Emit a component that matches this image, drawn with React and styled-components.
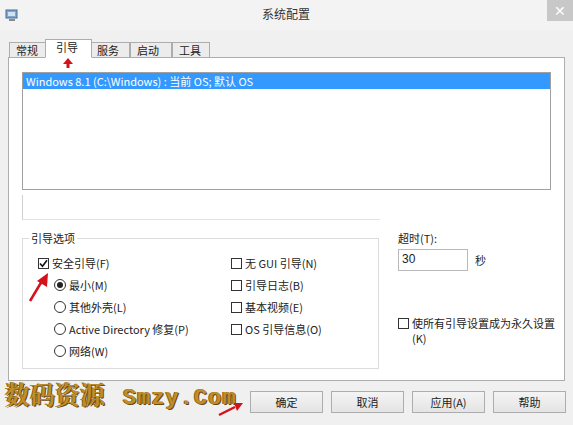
import React from 'react';
import styled, { createGlobalStyle } from 'styled-components';

const GlobalStyle = createGlobalStyle`
  html, body {
    margin: 0;
    padding: 0;
    background: #f0f0f0;
  }
  body {
    font-family: "Noto Sans CJK SC", "Noto Sans", "Liberation Sans", sans-serif;
    font-size: 11px;
    color: #1e1e1e;
  }
`;

const Window = styled.div`
  position: relative;
  width: 573px;
  height: 425px;
  background: #f0f0f0;
  box-sizing: border-box;
  overflow: hidden;
  display: flex;
  flex-direction: column;
`;

const TitleBar = styled.header`
  height: 30px;
  display: flex;
  align-items: center;
  position: relative;
  padding-left: 5px;
  background: #f3f3f3;
`;

const Title = styled.div`
  flex: 1;
  text-align: center;
  font-size: 12px;
  color: #333;
  margin-left: 6px;
  padding-bottom: 4px;
`;

const CloseButton = styled.div`
  align-self: flex-start;
  width: 26px;
  height: 21px;
  background: #c8c8c8;
  color: #fff;
  display: flex;
  align-items: center;
  justify-content: center;
  font-size: 14px;
  font-family: "Liberation Sans", sans-serif;
`;

const TabRow = styled.div`
  display: flex;
  align-items: flex-end;
  padding-left: 9px;
  height: 28px;
  margin-bottom: -1px;
  position: relative;
  z-index: 1;
`;

const Tab = styled.div`
  width: ${(p) => p.$w}px;
  height: ${(p) => (p.$active ? 19 : 16)}px;
  box-sizing: border-box;
  border: 1px solid #adadad;
  border-bottom: ${(p) => (p.$active ? '1px solid #fff' : '1px solid #adadad')};
  background: ${(p) => (p.$active ? '#fff' : '#ececec')};
  margin-left: ${(p) => (p.$active ? -2 : 0)}px;
  margin-right: ${(p) => (p.$active ? -2 : 0)}px;
  z-index: ${(p) => (p.$active ? 2 : 1)};
  padding-left: ${(p) => (p.$active ? 10 : 6)}px;
  line-height: ${(p) => (p.$active ? 14 : 15)}px;
  font-size: 11px;
  color: #222;
`;

const Panel = styled.section`
  margin: 0 8px;
  height: 324px;
  box-sizing: border-box;
  background: #fff;
  border: 1px solid #adadad;
  padding: 14px 13px 0 13px;
  display: flex;
  flex-direction: column;
`;

const BootList = styled.div`
  height: 118px;
  box-sizing: border-box;
  border: 1px solid #a0a0a0;
`;

const BootItem = styled.div`
  height: 16px;
  line-height: 16px;
  background: #3399ff;
  color: #fff;
  padding-left: 3px;
  font-size: 11px;
`;

const ActionBox = styled.div`
  margin-top: 5px;
  width: 358px;
  height: 25px;
  box-sizing: border-box;
  border-left: 1px solid #d0d0d0;
  border-bottom: 1px solid #e2e2e2;
`;

const OptionsRow = styled.div`
  display: flex;
  margin-top: 10px;
`;

const GroupBox = styled.fieldset`
  flex: 0 0 357px;
  width: 357px;
  height: 139px;
  box-sizing: border-box;
  margin: 0;
  border: 1px solid #dcdcdc;
  padding: 9px 0 0 6px;
`;

const Legend = styled.legend`
  padding: 0 2px;
  margin-left: 0;
  font-size: 11px;
  color: #222;
`;

const Columns = styled.div`
  display: grid;
  grid-template-columns: 193px 1fr;
  padding-left: 9px;
`;

const Column = styled.div`
  display: flex;
  flex-direction: column;
  gap: 6px;
`;

const OptionLine = styled.label`
  display: flex;
  align-items: center;
  height: 16px;
  gap: 3px;
  padding-left: ${(p) => p.$indent || 0}px;
  font-size: 11px;
  color: #222;
  white-space: nowrap;
`;

const Box = styled.span`
  width: 11px;
  height: 11px;
  box-sizing: border-box;
  border: 1px solid #333;
  background: #fff;
  flex-shrink: 0;
  display: flex;
  align-items: center;
  justify-content: center;
`;

const Radio = styled.span`
  width: 12px;
  height: 12px;
  box-sizing: border-box;
  border: 1px solid #333;
  border-radius: 50%;
  background: #fff;
  flex-shrink: 0;
  display: flex;
  align-items: center;
  justify-content: center;
  &::after {
    content: '';
    display: ${(p) => (p.$on ? 'block' : 'none')};
    width: 6px;
    height: 6px;
    border-radius: 50%;
    background: #222;
  }
`;

const RightSide = styled.div`
  flex: 1;
  min-width: 0;
  padding-left: 19px;
  display: flex;
  flex-direction: column;
`;

const FieldLabel = styled.div`
  font-size: 11px;
  color: #222;
  margin-top: 0;
  height: 16px;
`;

const TimeoutRow = styled.div`
  display: flex;
  align-items: center;
  gap: 7px;
  margin-top: 3px;
`;

const NumberInput = styled.div`
  width: 70px;
  height: 22px;
  box-sizing: border-box;
  border: 1px solid #b9b9b9;
  padding: 2px 0 0 3px;
  font-size: 12px;
  font-family: "Liberation Sans", sans-serif;
  color: #222;
`;

const PermanentOption = styled.label`
  display: flex;
  align-items: flex-start;
  gap: 3px;
  margin-top: 45px;
  font-size: 11px;
  line-height: 15px;
  color: #222;
  width: 160px;
  span:first-child {
    margin-top: 2px;
  }
`;

const ButtonBar = styled.footer`
  display: flex;
  justify-content: flex-end;
  gap: 8px;
  padding: 10px 7px 0 0;
`;

const Button = styled.div`
  width: 73px;
  height: 22px;
  box-sizing: border-box;
  border: 1px solid #adadad;
  background: linear-gradient(#f4f4f4, #e4e4e4);
  display: flex;
  align-items: center;
  justify-content: center;
  font-size: 11px;
  color: #222;
`;

const Watermark = styled.div`
  position: absolute;
  left: 5px;
  top: 375px;
  font-family: "Noto Serif CJK SC", "Noto Sans CJK SC", serif;
  font-weight: bold;
  font-size: 25px;
  color: #c08d28;
  text-shadow: 1px 1px 0 #6b4a10, -1px 0 0 #8a6418;
  white-space: nowrap;
  span {
    font-family: "Liberation Mono", monospace;
    font-size: 22px;
    margin-left: 18px;
    letter-spacing: 1px;
  }
`;

const Arrow = styled.svg`
  position: absolute;
  left: ${(p) => p.$x}px;
  top: ${(p) => p.$y}px;
  overflow: visible;
`;

const Check = () => (
  <svg width="9" height="9" viewBox="0 0 9 9">
    <path d="M1 4.5 L3.5 7.2 L8 1.2" fill="none" stroke="#111" strokeWidth="1.6" />
  </svg>
);

const tabs = [
  { label: '常规', w: 38 },
  { label: '引导', w: 47, active: true },
  { label: '服务', w: 40 },
  { label: '启动', w: 42 },
  { label: '工具', w: 38 },
];

export default function App() {
  return (
    <>
      <GlobalStyle />
      <Window>
        <TitleBar>
          <svg width="14" height="13" viewBox="0 0 14 13">
            <rect x="1" y="1" width="11" height="8" fill="#7fa7d0" stroke="#4a6d94" />
            <rect x="3" y="3" width="7" height="4" fill="#cfe3f5" />
            <rect x="4" y="10" width="6" height="2" fill="#8a8a8a" />
          </svg>
          <Title>系统配置</Title>
          <CloseButton>✕</CloseButton>
        </TitleBar>

        <TabRow>
          {tabs.map((t) => (
            <Tab key={t.label} $w={t.w} $active={t.active}>
              {t.label}
            </Tab>
          ))}
        </TabRow>

        <Panel>
          <BootList>
            <BootItem>Windows 8.1 (C:\Windows) : 当前 OS; 默认 OS</BootItem>
          </BootList>
          <ActionBox />

          <OptionsRow>
            <GroupBox>
              <Legend>引导选项</Legend>
              <Columns>
                <Column>
                  <OptionLine>
                    <Box>
                      <Check />
                    </Box>
                    安全引导(F)
                  </OptionLine>
                  <OptionLine $indent={16}>
                    <Radio $on />
                    最小(M)
                  </OptionLine>
                  <OptionLine $indent={16}>
                    <Radio />
                    其他外壳(L)
                  </OptionLine>
                  <OptionLine $indent={16}>
                    <Radio />
                    Active Directory 修复(P)
                  </OptionLine>
                  <OptionLine $indent={16}>
                    <Radio />
                    网络(W)
                  </OptionLine>
                </Column>
                <Column>
                  <OptionLine>
                    <Box />
                    无 GUI 引导(N)
                  </OptionLine>
                  <OptionLine>
                    <Box />
                    引导日志(B)
                  </OptionLine>
                  <OptionLine>
                    <Box />
                    基本视频(E)
                  </OptionLine>
                  <OptionLine>
                    <Box />
                    OS 引导信息(O)
                  </OptionLine>
                </Column>
              </Columns>
            </GroupBox>

            <RightSide>
              <FieldLabel>超时(T):</FieldLabel>
              <TimeoutRow>
                <NumberInput>30</NumberInput>
                <span>秒</span>
              </TimeoutRow>
              <PermanentOption>
                <Box />
                <span>使所有引导设置成为永久设置(K)</span>
              </PermanentOption>
            </RightSide>
          </OptionsRow>
        </Panel>

        <ButtonBar>
          <Button>确定</Button>
          <Button>取消</Button>
          <Button>应用(A)</Button>
          <Button>帮助</Button>
        </ButtonBar>

        <Watermark>
          数码资源<span>Smzy.Com</span>
        </Watermark>

        <Arrow $x={62} $y={58} width="12" height="12" viewBox="0 0 12 12">
          <path d="M6 0 L11 6 L7.5 6 L7.5 10 L4.5 10 L4.5 6 L1 6 Z" fill="#d4121a" />
        </Arrow>
        <Arrow $x={28} $y={272} width="24" height="30" viewBox="0 0 24 30">
          <path d="M2 29 L14 9" stroke="#d4121a" strokeWidth="2.5" />
          <path d="M20 1 L19 15 L9 9 Z" fill="#d4121a" />
        </Arrow>
        <Arrow $x={218} $y={402} width="26" height="14" viewBox="0 0 26 14">
          <path d="M1 13 L17 5" stroke="#d4121a" strokeWidth="2.5" />
          <path d="M25 1 L16 1 L19 9 Z" fill="#d4121a" />
        </Arrow>
      </Window>
    </>
  );
}
